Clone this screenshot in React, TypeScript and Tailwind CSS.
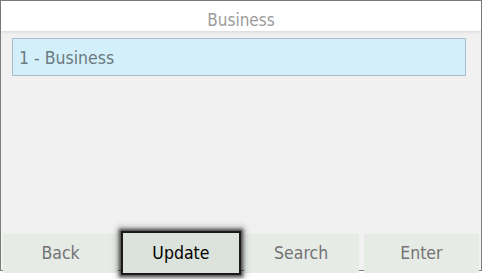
import React from "react";

const buttons = ["Back", "Update", "Search", "Enter"];

export default function App() {
  return (
    <div className="w-[482px] h-[279px] bg-white font-['DejaVu_Sans_Condensed','DejaVu_Sans',sans-serif]">
      <div className="h-[271px] border border-[#7d7d7d] bg-[#f1f1f1] flex flex-col">
        <div className="h-[30px] shrink-0 bg-white shadow-[0_1px_3px_rgba(0,0,0,0.12)] flex items-center justify-center pt-[9px] text-[17px] text-[#9b9b9b] relative z-10">
          Business
        </div>
        <div className="flex-1 pt-[7px] pl-[11px] pr-[15px]">
          <div className="h-[38px] border border-[#a8bfcb] bg-[#d3effa] flex items-center pl-[6px] pt-[3px] text-[17.5px] text-[#6b7a80]">
            1 - Business
          </div>
        </div>
        <div className="h-[36px] shrink-0 grid grid-cols-4 gap-[5px] px-[2px]">
          {buttons.map((label) =>
            label === "Update" ? (
              <div
                key={label}
                className="relative z-10 -mt-[1px] h-[40px] bg-[#dce2dc] flex items-center justify-center text-[17.5px] text-black shadow-[0_0_0_2px_#1a1a1a,0_0_3px_4px_rgba(0,0,0,0.6),0_0_6px_6px_rgba(0,0,0,0.25)]"
              >
                {label}
              </div>
            ) : (
              <div
                key={label}
                className="bg-[#e6ebe6] flex items-center justify-center text-[17.5px] text-[#747474]"
              >
                {label}
              </div>
            )
          )}
        </div>
      </div>
    </div>
  );
}
